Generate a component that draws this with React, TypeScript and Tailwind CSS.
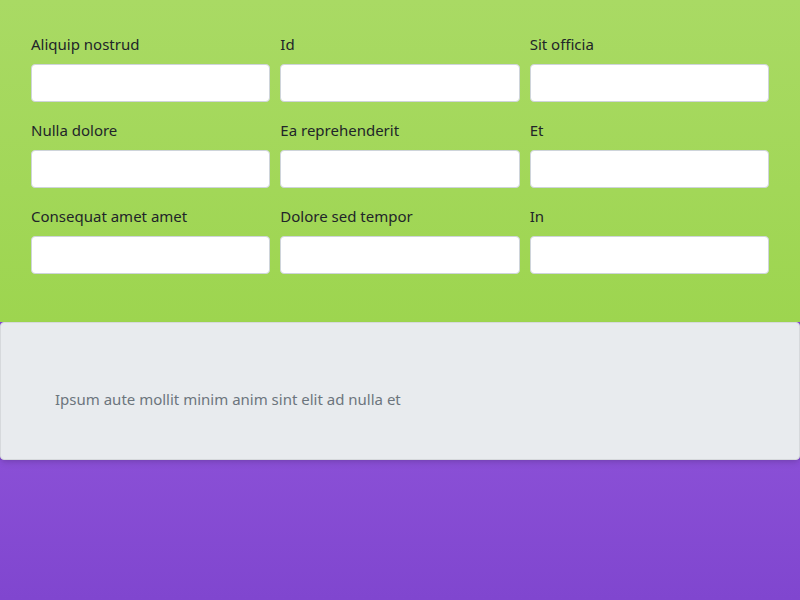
const fields = [
  'Aliquip nostrud',
  'Id',
  'Sit officia',
  'Nulla dolore',
  'Ea reprehenderit',
  'Et',
  'Consequat amet amet',
  'Dolore sed tempor',
  'In',
];

export default function App() {
  return (
    <div className="min-h-[600px] flex flex-col font-['Noto_Sans',sans-serif] bg-[#8046cf]">
      {/* Form */}
      <div className="bg-gradient-to-b from-[#a9da64] to-[#9dd54f] pt-[33px] pb-[48px] px-[31px]">
        <div className="grid grid-cols-3 gap-x-[10px] gap-y-[17px]">
          {fields.map((f) => (
            <div key={f} className="flex flex-col">
              <label className="text-[15px] leading-[22px] text-[#212529] mb-[9px]">{f}</label>
              <input className="h-[38px] w-full rounded-[4px] border border-[#ced4da] bg-white" />
            </div>
          ))}
        </div>
      </div>

      {/* Panel */}
      <div className="h-[138px] rounded-[4px] border border-[#d6d9dc] bg-[#e8ebee] shadow-md flex items-center pt-4 px-[54px] relative z-10">
        <p className="text-[15px] text-[#6c757d]">Ipsum aute mollit minim anim sint elit ad nulla et</p>
      </div>

      <div className="flex-1 bg-gradient-to-b from-[#8a4fd6] to-[#8046cf]" />
    </div>
  );
}
